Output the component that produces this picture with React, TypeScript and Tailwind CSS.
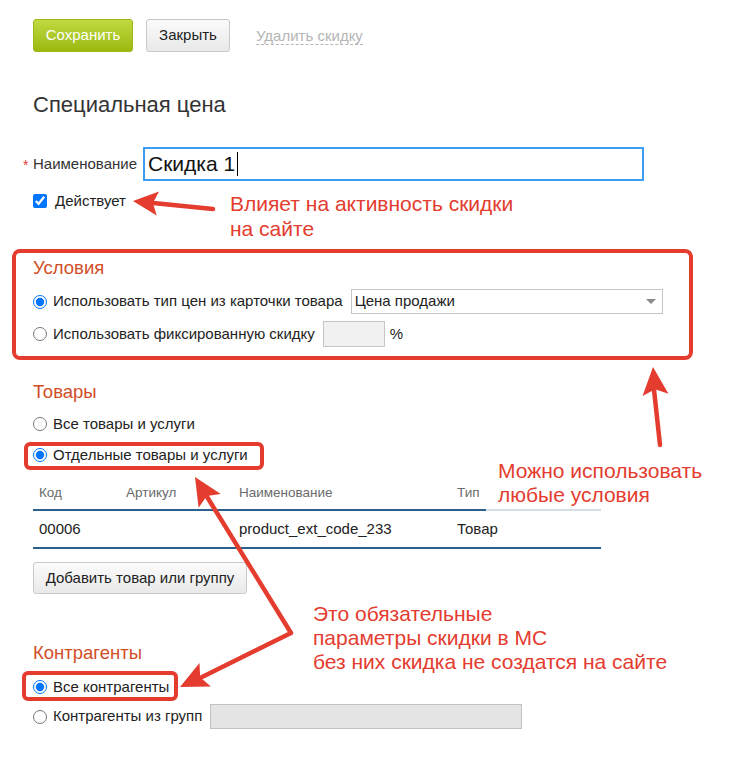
import React from 'react';

// Red annotation colour used for the callouts, frames and arrows
const RED = '#e43c2f';

type Pt = [number, number];

// Builds the arrowhead polygon for a shaft going from `from` to `tip`
function arrowHead(from: Pt, tip: Pt, len = 26, half = 12) {
  const dx = tip[0] - from[0];
  const dy = tip[1] - from[1];
  const d = Math.hypot(dx, dy);
  const ux = dx / d;
  const uy = dy / d;
  const nx = -uy;
  const ny = ux;
  const bx = tip[0] - ux * len;
  const by = tip[1] - uy * len;
  const mx = tip[0] - ux * len * 0.8;
  const my = tip[1] - uy * len * 0.8;
  return `${tip[0]},${tip[1]} ${bx + nx * half},${by + ny * half} ${mx},${my} ${bx - nx * half},${by - ny * half}`;
}

function Radio({ checked, label }: { checked?: boolean; label: string }) {
  return (
    <label className="flex items-center gap-[6px] h-[20px] text-[15px] text-[#222]">
      <input type="radio" checked={!!checked} readOnly className="m-0 w-[14px] h-[14px]" />
      <span>{label}</span>
    </label>
  );
}

function SectionTitle({ children }: { children: React.ReactNode }) {
  return <div className="text-[18.5px] leading-[20px] text-[#d24e27]">{children}</div>;
}

export default function App() {
  const tipA: Pt = [133, 201];
  const tailA: Pt = [213, 209];
  const tipB: Pt = [653, 367];
  const tailB: Pt = [660, 445];
  const tipC1: Pt = [195, 477];
  const corner: Pt = [291, 633];
  const tipC2: Pt = [180, 687];

  return (
    <div className="relative w-[734px] h-[781px] bg-white overflow-hidden font-['Liberation_Sans',Arial,sans-serif]">
      {/* Form content */}
      <div className="pl-[33px] pt-[19px]">
        {/* Toolbar */}
        <div className="flex items-center h-[33px]">
          <button className="w-[100px] h-[33px] rounded-[3px] border border-[#9db818] bg-gradient-to-b from-[#bfda3e] to-[#9bb80b] text-white text-[15px]">
            Сохранить
          </button>
          <button className="ml-[13px] w-[84px] h-[33px] rounded-[3px] border border-[#c9c9c9] bg-gradient-to-b from-[#fbfbfb] to-[#e9e9e9] text-[#222] text-[15px]">
            Закрыть
          </button>
          <span className="ml-[26px] text-[15px] leading-[17px] text-[#b5b5b5] border-b border-dashed border-[#b5b5b5]">
            Удалить скидку
          </span>
        </div>

        <h1 className="mt-[41px] text-[22px] leading-[24px] text-[#333]">Специальная цена</h1>

        {/* Name */}
        <div className="mt-[30px] flex items-center -ml-[10px]">
          <span className="w-[10px] text-[14px] text-[#e53935] self-start mt-[8px]">*</span>
          <span className="text-[15px] text-[#333]">Наименование</span>
          <div className="ml-[6px] w-[501px] h-[34px] border-2 border-[#3d9cf0] flex items-center pl-[3px] text-[21px] text-[#111]">
            Скидка 1<span className="ml-[2px] w-px h-[24px] bg-black" />
          </div>
        </div>

        <label className="mt-[10px] flex items-center gap-[8px] h-[20px] text-[15px] text-[#222]">
          <input type="checkbox" checked readOnly className="m-0 w-[14px] h-[14px]" />
          <span>Действует</span>
        </label>

        {/* Conditions */}
        <div className="mt-[47px]">
          <SectionTitle>Условия</SectionTitle>
          <div className="mt-[11px] flex items-center h-[25px]">
            <Radio checked label="Использовать тип цен из карточки товара" />
            <div className="ml-[8px] w-[312px] h-[25px] border border-[#c6c6c6] flex items-center justify-between pl-[3px] pr-[6px] text-[15px] text-[#222]">
              <span>Цена продажи</span>
              <span className="w-0 h-0 border-l-[5px] border-r-[5px] border-t-[5px] border-l-transparent border-r-transparent border-t-[#8a8a8a]" />
            </div>
          </div>
          <div className="mt-[7px] flex items-center h-[26px]">
            <Radio label="Использовать фиксированную скидку" />
            <div className="ml-[8px] w-[62px] h-[26px] border border-[#c6c6c6] bg-[#f1f1f1]" />
            <span className="ml-[5px] text-[15px] text-[#222]">%</span>
          </div>
        </div>

        {/* Goods */}
        <div className="mt-[35px]">
          <SectionTitle>Товары</SectionTitle>
          <div className="mt-[12px]">
            <Radio label="Все товары и услуги" />
          </div>
          <div className="mt-[11px]">
            <Radio checked label="Отдельные товары и услуги" />
          </div>

          <div className="mt-[13px] w-[568px]">
            <div className="grid grid-cols-[87px_113px_218px_150px] h-[33px] text-[13.5px] text-[#6b6b6b]">
              <div className="flex items-center pl-[6px] border-b-2 border-[#2b5f8c]">Код</div>
              <div className="flex items-center pl-[6px] border-b-2 border-[#2b5f8c]">Артикул</div>
              <div className="flex items-center pl-[6px] border-b-2 border-[#2b5f8c]">Наименование</div>
              <div className="relative flex items-center pl-[6px] border-b-2 border-[#d5dde5]">
                Тип
                <span className="absolute left-0 -bottom-[2px] w-[35px] h-[2px] bg-[#2b5f8c]" />
              </div>
            </div>
            <div className="grid grid-cols-[87px_113px_218px_150px] h-[38px] border-b-2 border-[#2b5f8c] text-[15px] text-[#222]">
              <div className="flex items-center pl-[6px]">00006</div>
              <div />
              <div className="flex items-center pl-[6px]">product_ext_code_233</div>
              <div className="flex items-center pl-[6px]">Товар</div>
            </div>
          </div>

          <button className="mt-[13px] w-[214px] h-[32px] rounded-[3px] border border-[#c9c9c9] bg-gradient-to-b from-[#fbfbfb] to-[#e9e9e9] text-[#222] text-[15px]">
            Добавить товар или группу
          </button>
        </div>

        {/* Counterparties */}
        <div className="mt-[49px]">
          <SectionTitle>Контрагенты</SectionTitle>
          <div className="mt-[14px]">
            <Radio checked label="Все контрагенты" />
          </div>
          <div className="mt-[7px] flex items-center h-[25px]">
            <Radio label="Контрагенты из групп" />
            <div className="ml-[8px] w-[312px] h-[25px] border border-[#c2c2c2] bg-[#e4e4e4]" />
          </div>
        </div>
      </div>

      {/* Annotation frames */}
      <div className="absolute left-[12px] top-[249px] w-[681px] h-[111px] border-4 border-[#e43c2f] rounded-[8px]" />
      <div className="absolute left-[24px] top-[442px] w-[240px] h-[28px] border-4 border-[#e43c2f] rounded-[6px]" />
      <div className="absolute left-[22px] top-[671px] w-[156px] h-[30px] border-4 border-[#e43c2f] rounded-[6px]" />

      {/* Annotation texts */}
      <div className="absolute left-[230px] top-[191px] text-[21px] leading-[25px] text-[#e43c2f]">
        Влияет на активность скидки
        <br />
        на сайте
      </div>
      <div className="absolute left-[498px] top-[459px] text-[21px] leading-[24px] text-[#e43c2f]">
        Можно использовать
        <br />
        любые условия
      </div>
      <div className="absolute left-[313px] top-[602px] text-[21px] leading-[24px] text-[#e43c2f] whitespace-nowrap">
        Это обязательные
        <br />
        параметры скидки в МС
        <br />
        без них скидка не создатся на сайте
      </div>

      {/* Arrows */}
      <svg className="absolute inset-0 pointer-events-none" width={734} height={781}>
        <line x1={tailA[0]} y1={tailA[1]} x2={tipA[0] + 15} y2={tipA[1] + 1.5} stroke={RED} strokeWidth={4.5} strokeLinecap="round" />
        <polygon points={arrowHead(tailA, tipA, 25, 12)} fill={RED} />

        <line x1={tailB[0]} y1={tailB[1]} x2={tipB[0] + 0.5} y2={tipB[1] + 18} stroke={RED} strokeWidth={4.5} strokeLinecap="round" />
        <polygon points={arrowHead(tailB, tipB, 28, 13)} fill={RED} />

        <polyline
          points={`${tipC1[0] + 6},${tipC1[1] + 10} ${corner[0]},${corner[1]} ${tipC2[0] + 12},${tipC2[1] - 5}`}
          fill="none"
          stroke={RED}
          strokeWidth={4.5}
          strokeLinejoin="round"
          strokeLinecap="round"
        />
        <polygon points={arrowHead(corner, tipC1, 28, 13)} fill={RED} />
        <polygon points={arrowHead(corner, tipC2, 28, 13)} fill={RED} />
      </svg>
    </div>
  );
}
